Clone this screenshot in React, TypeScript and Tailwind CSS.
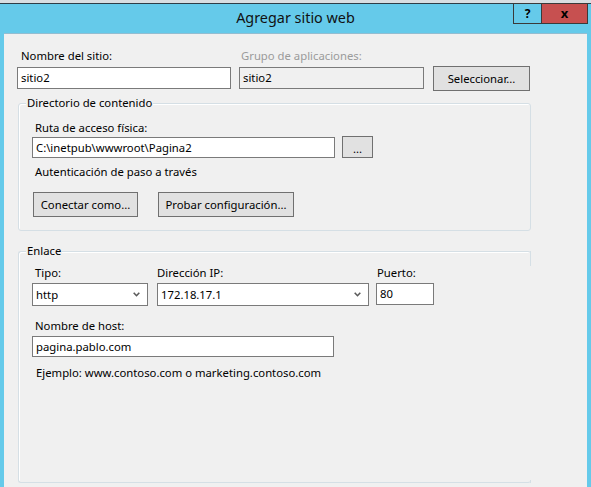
import React from "react";

const TextBox = ({
  value,
  className = "",
  disabled = false,
}: {
  value: string;
  className?: string;
  disabled?: boolean;
}) => (
  <div
    className={`flex items-center border border-[#7a7a7a] pl-[3px] leading-none ${
      disabled ? "bg-[#f0f0f0]" : "bg-white"
    } ${className}`}
  >
    {value}
  </div>
);

const Button = ({ text, className = "" }: { text: string; className?: string }) => (
  <div
    className={`flex items-center justify-center border border-[#707070] bg-[#e1e1e1] leading-none ${className}`}
  >
    {text}
  </div>
);

const Select = ({ value, className = "" }: { value: string; className?: string }) => (
  <div
    className={`flex items-center justify-between border border-[#7a7a7a] bg-white pl-[3px] pr-[7px] leading-none ${className}`}
  >
    <span>{value}</span>
    <svg width="7" height="5" viewBox="0 0 7 5" className="text-[#5a5a5a]">
      <polyline points="0.7,0.7 3.5,3.7 6.3,0.7" fill="none" stroke="currentColor" strokeWidth="1.6" />
    </svg>
  </div>
);

const Label = ({ text, className = "" }: { text: string; className?: string }) => (
  <div className={`h-[16px] leading-[16px] whitespace-nowrap ${className}`}>{text}</div>
);

const GroupBox = ({
  title,
  className = "",
  children,
}: {
  title: string;
  className?: string;
  children: React.ReactNode;
}) => (
  <div
    className={`relative rounded-[3px] border border-[#d5dfe5] shadow-[inset_1px_1px_0_#ffffff] ${className}`}
  >
    <div className="absolute left-[7px] top-[-9px] h-[16px] bg-[#f0f0f0] px-[1px] leading-[16px]">
      {title}
    </div>
    {children}
  </div>
);

export default function App() {
  return (
    <div className="h-[487px] w-[591px] overflow-hidden bg-[#65caea] font-['Noto_Sans',sans-serif] text-[11.3px] text-black">
      {/* window frame top */}
      <div className="h-[3px] bg-[#d8dee2]" />
      <div className="h-[1px] bg-[#2e3d47]" />

      {/* title bar */}
      <div className="relative flex h-[29px] items-center justify-center">
        <span className="pb-[1px] text-[14.4px] leading-none text-[#111]">Agregar sitio web</span>
        <div className="absolute right-[3px] top-[-1px] flex h-[21px] border border-[#3a3a3a]">
          <div className="flex w-[28px] items-center justify-center border-r border-[#3a3a3a] text-[12px] font-bold leading-none">
            ?
          </div>
          <div className="flex w-[45px] items-center justify-center bg-[#c75050] text-[13px] font-bold leading-none">
            x
          </div>
        </div>
      </div>

      {/* client area */}
      <div className="ml-[4px] h-[454px] w-[583px] border-t border-[#93bdd1] bg-[#f0f0f0]">
        {/* site name row */}
        <div className="ml-[13px] mt-[14px] flex">
          <div className="w-[214px]">
            <Label text="Nombre del sitio:" className="pl-[4px]" />
            <TextBox value="sitio2" className="mt-[3px] h-[22px]" />
          </div>
          <div className="ml-[8px] w-[185px]">
            <Label text="Grupo de aplicaciones:" className="pl-[2px] text-[#9b9b9b]" />
            <TextBox value="sitio2" disabled className="mt-[3px] h-[22px]" />
          </div>
          <div className="ml-[9px] pt-[18px]">
            <Button text="Seleccionar..." className="h-[25px] w-[97px]" />
          </div>
        </div>

        {/* content directory */}
        <GroupBox title="Directorio de contenido" className="ml-[14px] mt-[12px] h-[128px] w-[513px]">
          <div className="pl-[13px] pt-[16px]">
            <Label text="Ruta de acceso física:" className="pl-[3px]" />
            <div className="flex items-start">
              <TextBox value="C:\inetpub\wwwroot\Pagina2" className="mt-[1px] h-[21px] w-[303px]" />
              <Button text="..." className="ml-[7px] h-[22px] w-[31px] pt-[4px]" />
            </div>
            <Label text="Autenticación de paso a través" className="mt-[6px] pl-[3px]" />
            <div className="ml-[1px] mt-[12px] flex">
              <Button text="Conectar como..." className="h-[25px] w-[105px]" />
              <Button text="Probar configuración..." className="ml-[20px] h-[25px] w-[136px]" />
            </div>
          </div>
        </GroupBox>

        {/* binding */}
        <GroupBox
          title="Enlace"
          className="ml-[14px] mt-[20px] h-[232px] w-[513px] border-r-transparent"
        >
          <div className="absolute right-[-1px] top-[-1px] h-[15px] w-[1px] bg-[#d5dfe5]" />
          <div className="absolute bottom-[-1px] right-[-1px] h-[3px] w-[1px] bg-[#d5dfe5]" />
          <div className="pl-[13px] pt-[13px]">
            <div className="flex">
              <div className="w-[116px]">
                <Label text="Tipo:" className="pl-[3px]" />
                <Select value="http" className="mt-[2px] h-[23px]" />
              </div>
              <div className="ml-[9px] w-[212px]">
                <Label text="Dirección IP:" className="pl-0" />
                <Select value="172.18.17.1" className="mt-[2px] h-[23px]" />
              </div>
              <div className="ml-[7px] w-[58px]">
                <Label text="Puerto:" className="pl-[1px]" />
                <TextBox value="80" className="mt-[2px] h-[22px]" />
              </div>
            </div>
            <Label text="Nombre de host:" className="mt-[12px] pl-[3px]" />
            <TextBox value="pagina.pablo.com" className="mt-[2px] h-[21px] w-[302px]" />
            <Label
              text="Ejemplo: www.contoso.com o marketing.contoso.com"
              className="mt-[8px] pl-[4px]"
            />
          </div>
        </GroupBox>
      </div>
    </div>
  );
}
